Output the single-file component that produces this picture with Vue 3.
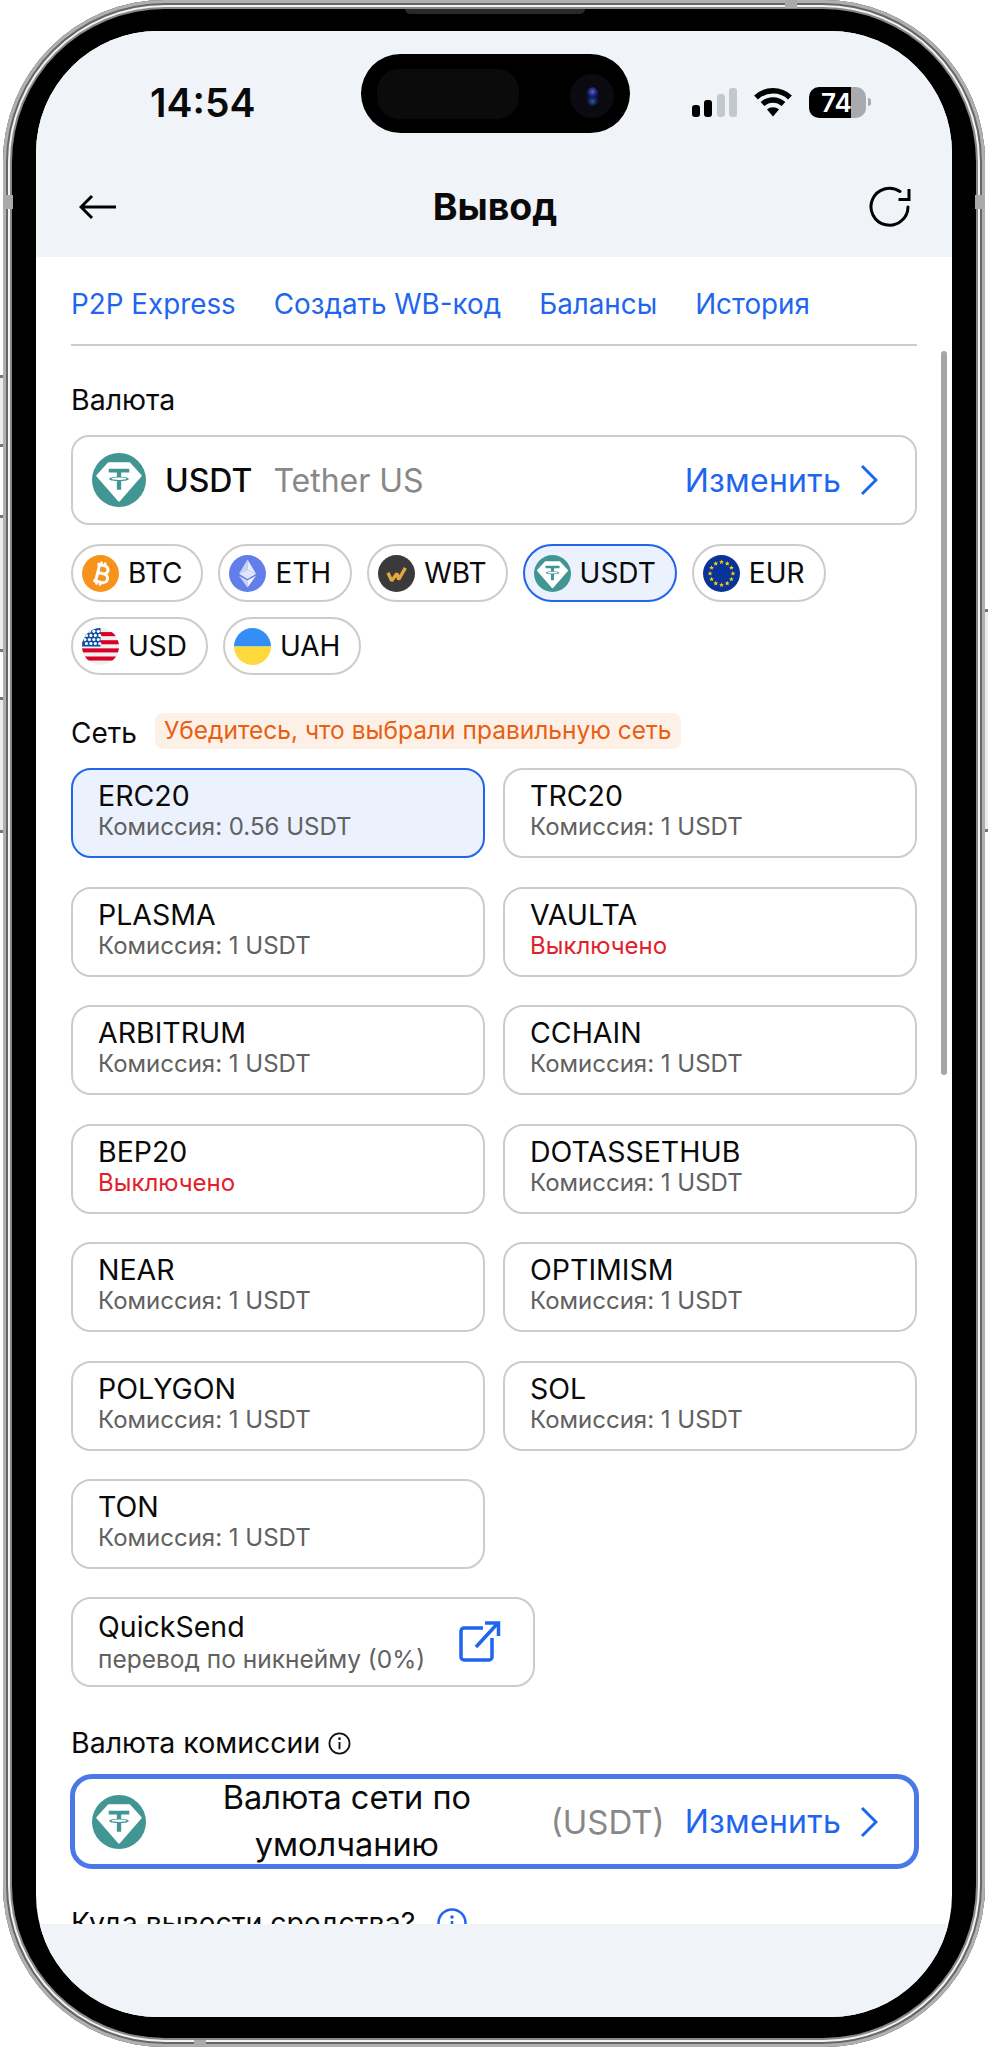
<template>
  <div class="phone">
    <!-- иконки монет -->
    <svg class="sprite" width="0" height="0" aria-hidden="true">
      <symbol id="coin-btc" viewBox="0 0 100 100">
        <circle cx="50" cy="50" r="50" fill="#f7931a" />
        <g transform="rotate(14 50 50)" fill="none" stroke="#fff" stroke-width="8" stroke-linejoin="round">
          <path d="M36 27H55C72 27 72 49 55 49H40M40 49H58C77 49 77 73 58 73H36M42 27V73" />
          <path d="M46 18V27M56 18V27M46 73V82M56 73V82" stroke-width="6.5" />
        </g>
      </symbol>
      <symbol id="coin-eth" viewBox="0 0 100 100">
        <circle cx="50" cy="50" r="50" fill="#627eea" />
        <path d="M50 12V40L27 51Z" fill="#fff" opacity=".65" />
        <path d="M50 12V40L73 51Z" fill="#fff" opacity=".85" />
        <path d="M27 51L50 40L73 51L50 65Z" fill="#dfe5fb" />
        <path d="M27 56L50 69V88Z" fill="#fff" opacity=".7" />
        <path d="M73 56L50 69V88Z" fill="#fff" opacity=".95" />
      </symbol>
      <symbol id="coin-wbt" viewBox="0 0 100 100">
        <circle cx="50" cy="50" r="50" fill="#3a393b" />
        <path d="M27 48L37 70L51 50L56 66L74 35" fill="none" stroke="#e5a93a" stroke-width="9" stroke-linejoin="bevel" />
      </symbol>
      <symbol id="coin-usdt" viewBox="0 0 100 100">
        <circle cx="50" cy="50" r="50" fill="#419592" />
        <path d="M31 19H69L90 42L50 88L10 42Z" fill="#fff" stroke="#fff" stroke-width="4" stroke-linejoin="round" />
        <path d="M31 29H69V36H54V44C62 44.500 68 46 68 48C68 50 62 51.500 54 52V68H46V52C38 51.500 32 50 32 48C32 46 38 44.500 46 44V36H31Z" fill="#419592" />
        <ellipse cx="50" cy="47.500" rx="14" ry="2.300" fill="#fff" />
      </symbol>
      <symbol id="coin-eur" viewBox="0 0 100 100">
        <circle cx="50" cy="50" r="50" fill="#0a3399" />
        <polygon
          v-for="s in euStars"
          :key="s"
          points="0,-7 1.800,-2.200 6.700,-2.200 2.800,.9 4.200,5.700 0,2.900 -4.200,5.700 -2.800,.9 -6.700,-2.200 -1.800,-2.200"
          fill="#ffd500"
          :transform="s"
        />
      </symbol>
      <symbol id="coin-usd" viewBox="0 0 100 100">
        <clipPath id="usd-clip"><circle cx="50" cy="50" r="50" /></clipPath>
        <g clip-path="url(#usd-clip)">
          <rect width="100" height="100" fill="#f0f0f0" />
          <rect y="11" width="100" height="11" fill="#d80027" />
          <rect y="33" width="100" height="11" fill="#d80027" />
          <rect y="55" width="100" height="11" fill="#d80027" />
          <rect y="77" width="100" height="11" fill="#d80027" />
          <path d="M0 0H50V50H0Z" fill="#0f4fa8" />
          <circle v-for="d in usDots" :key="d.k" :cx="d.x" :cy="d.y" r="4.200" fill="#fff" />
        </g>
      </symbol>
      <symbol id="coin-uah" viewBox="0 0 100 100">
        <clipPath id="uah-clip"><circle cx="50" cy="50" r="50" /></clipPath>
        <g clip-path="url(#uah-clip)">
          <rect width="100" height="50" fill="#338ff5" />
          <rect y="50" width="100" height="50" fill="#ffd93b" />
        </g>
      </symbol>
    </svg>

    <div class="bezel">
      <div class="screen">
        <div class="island">
          <div class="island-glass"></div>
          <div class="camera"><i></i></div>
        </div>

        <header class="top">
          <div class="status">
            <span class="time">14:54</span>
            <div class="status-icons">
              <div class="signal">
                <i class="on" style="height: 12px"></i>
                <i class="on" style="height: 17px"></i>
                <i style="height: 23px"></i>
                <i style="height: 29px"></i>
              </div>
              <svg class="wifi" viewBox="0 0 38 30">
                <path d="M2 10.500C11.500 1.500 26.500 1.500 36 10.500" fill="none" stroke="#000" stroke-width="5.500" />
                <path d="M8.500 17C14.500 11.500 23.500 11.500 29.500 17" fill="none" stroke="#000" stroke-width="5.500" />
                <path d="M13 22.500C16.500 19.500 21.500 19.500 25 22.500L19 29.500Z" fill="#000" />
              </svg>
              <div class="battery"><span>74</span></div>
              <div class="battery-nub"></div>
            </div>
          </div>
          <div class="nav">
            <svg class="nav-back" viewBox="0 0 38 26">
              <path d="M37 13H2M13 2L2 13L13 24" fill="none" stroke="#000" stroke-width="3" />
            </svg>
            <h1>Вывод</h1>
            <svg class="nav-refresh" viewBox="0 0 42 42">
              <path d="M39 21A18.500 18.500 0 1 1 31 5.500" fill="none" stroke="#000" stroke-width="3" stroke-linecap="round" />
              <path d="M40 3V13.500H29.500" fill="none" stroke="#000" stroke-width="3" />
            </svg>
          </div>
        </header>

        <main class="content">
          <nav class="tabs">
            <a v-for="t in tabs" :key="t">{{ t }}</a>
          </nav>

          <div class="label first">Валюта</div>
          <div class="select">
            <svg class="select-coin"><use href="#coin-usdt" /></svg>
            <span class="select-name">USDT</span>
            <span class="select-sub">Tether US</span>
            <span class="change">Изменить</span>
            <svg class="chevron" viewBox="0 0 18 32">
              <path d="M2 2L16 16L2 30" fill="none" stroke="#1f66ee" stroke-width="3" />
            </svg>
          </div>

          <div class="pills">
            <div v-for="c in coins" :key="c" class="pill" :class="{ active: c === 'USDT' }">
              <svg class="pill-coin"><use :href="'#coin-' + c.toLowerCase()" /></svg>
              <span>{{ c }}</span>
            </div>
          </div>

          <div class="net-head">
            <span class="net-title">Сеть</span>
            <span class="net-warn">Убедитесь, что выбрали правильную сеть</span>
          </div>

          <div class="networks">
            <div v-for="n in networks" :key="n.name" class="net" :class="{ active: n.name === 'ERC20' }">
              <div class="net-name">{{ n.name }}</div>
              <div class="net-fee" :class="{ off: !n.fee }">{{ n.fee ? 'Комиссия: ' + n.fee + ' USDT' : 'Выключено' }}</div>
            </div>
          </div>

          <div class="quick">
            <div>
              <div class="net-name">QuickSend</div>
              <div class="net-fee">перевод по никнейму (0%)</div>
            </div>
            <svg class="quick-icon" viewBox="0 0 42 42">
              <path d="M24 8H5C3.300 8 2 9.300 2 11V37C2 38.700 3.300 40 5 40H30C31.700 40 33 38.700 33 37V18" fill="none" stroke="#1f66ee" stroke-width="3.500" />
              <path d="M17 27L39 3M26 3H39.500V16" fill="none" stroke="#1f66ee" stroke-width="3.500" />
            </svg>
          </div>

          <div class="label fee-label">
            Валюта комиссии
            <svg class="info" viewBox="0 0 24 24">
              <circle cx="12" cy="12" r="10.500" fill="none" stroke="#111" stroke-width="1.800" />
              <circle cx="12" cy="7" r="1.400" fill="#111" />
              <path d="M12 10.500V18" stroke="#111" stroke-width="2" />
            </svg>
          </div>
          <div class="select focused">
            <svg class="select-coin"><use href="#coin-usdt" /></svg>
            <span class="select-title">Валюта сети по умолчанию</span>
            <span class="select-code">(USDT)</span>
            <span class="change">Изменить</span>
            <svg class="chevron" viewBox="0 0 18 32">
              <path d="M2 2L16 16L2 30" fill="none" stroke="#1f66ee" stroke-width="3" />
            </svg>
          </div>

          <div class="label where">
            Куда вывести средства?
            <svg class="info-blue" viewBox="0 0 30 30">
              <circle cx="15" cy="15" r="13.500" fill="none" stroke="#1f66ee" stroke-width="2.500" />
              <circle cx="15" cy="9" r="1.800" fill="#1f66ee" />
              <path d="M15 13V22" stroke="#1f66ee" stroke-width="2.500" />
            </svg>
          </div>

          <div class="scrollbar"></div>
        </main>

        <footer class="bottom"></footer>
      </div>
    </div>

    <i class="speaker"></i>
    <i class="btn right-power"></i>
    <i class="btn left-silent"></i>
    <i class="btn left-up"></i>
    <i class="btn left-down"></i>
    <i class="band band-l"></i>
    <i class="band band-r"></i>
    <i class="band band-t"></i>
    <i class="band band-b"></i>
  </div>
</template>

<script setup>
const tabs = ['P2P Express', 'Создать WB-код', 'Балансы', 'История']
const coins = ['BTC', 'ETH', 'WBT', 'USDT', 'EUR', 'USD', 'UAH']

const networks = [
  { name: 'ERC20', fee: '0.56' },
  { name: 'TRC20', fee: '1' },
  { name: 'PLASMA', fee: '1' },
  { name: 'VAULTA', fee: '' },
  { name: 'ARBITRUM', fee: '1' },
  { name: 'CCHAIN', fee: '1' },
  { name: 'BEP20', fee: '' },
  { name: 'DOTASSETHUB', fee: '1' },
  { name: 'NEAR', fee: '1' },
  { name: 'OPTIMISM', fee: '1' },
  { name: 'POLYGON', fee: '1' },
  { name: 'SOL', fee: '1' },
  { name: 'TON', fee: '1' },
]

// звёзды флага ЕС по кругу
const euStars = Array.from({ length: 12 }, (_, i) => {
  const a = (i * Math.PI) / 6
  const x = 50 + 31 * Math.sin(a)
  const y = 50 - 31 * Math.cos(a)
  return `translate(${x.toFixed(1)} ${y.toFixed(1)})`
})

const usDots = []
for (let r = 0; r < 4; r++) {
  for (let c = 0; c < 4; c++) {
    usDots.push({ k: `${r}-${c}`, x: 8 + c * 12 + (r % 2) * 4, y: 9 + r * 11 })
  }
}
</script>

<style>
html,
body {
  background: #fff;
}
</style>

<style scoped>
.phone {
  position: relative;
  width: 989px;
  height: 2048px;
  padding: 0 4px 1px 3px;
  box-sizing: border-box;
  background: #fff;
  font-family: Inter, 'Liberation Sans', sans-serif;
  color: #0a0a0a;
  overflow: hidden;
}

.sprite {
  position: absolute;
}

.bezel {
  height: 100%;
  box-sizing: border-box;
  padding: 31px 33px 30px 33px;
  background: #000;
  border-radius: 162px;
  box-shadow:
    inset 0 0 0 3px #b0b0b0,
    inset 0 0 0 5px #666,
    inset 0 0 0 7px #f2f2f2,
    inset 0 0 0 9px #888;
}

.screen {
  position: relative;
  display: flex;
  flex-direction: column;
  height: 100%;
  background: #fff;
  border-radius: 122px;
  overflow: hidden;
}

/* шапка */
.top {
  flex: none;
  height: 226px;
  background: #f0f4f9;
}

.status {
  display: flex;
  justify-content: space-between;
  align-items: center;
  height: 142px;
  padding: 0 81px 0 114px;
  box-sizing: border-box;
}

.time {
  font-size: 39px;
  font-weight: 600;
}

.status-icons {
  display: flex;
  align-items: center;
  gap: 0;
}

.signal {
  display: flex;
  align-items: flex-end;
  gap: 4.5px;
  height: 29px;
  margin-right: 17px;
}

.signal i {
  width: 8px;
  border-radius: 3px;
  background: #c3c8cc;
}

.signal i.on {
  background: #000;
}

.wifi {
  width: 38px;
  height: 30px;
  margin-right: 17px;
}

.battery {
  width: 57px;
  height: 31px;
  border-radius: 10px;
  background: linear-gradient(90deg, #000 42px, #a9aab0 42px);
  display: flex;
  align-items: center;
  justify-content: center;
  color: #fff;
  font-size: 26px;
  font-weight: 600;
}

.battery span {
  margin-left: -2px;
}

.battery-nub {
  width: 3px;
  height: 8px;
  margin-left: 2px;
  border-radius: 0 3px 3px 0;
  background: #a9aab0;
}

.island {
  position: absolute;
  left: 325px;
  top: 23px;
  width: 269px;
  height: 79px;
  border-radius: 40px;
  background: #000;
}

.island-glass {
  position: absolute;
  left: 16px;
  top: 15px;
  width: 142px;
  height: 50px;
  border-radius: 22px;
  background: #0b0b0b;
}

.camera {
  position: absolute;
  left: 209px;
  top: 20px;
  width: 44px;
  height: 44px;
  display: flex;
  align-items: center;
  justify-content: center;
  border-radius: 50%;
  background: #0a0a10;
}

.camera i {
  width: 13px;
  height: 19px;
  border-radius: 50%;
  background:
    radial-gradient(circle at 50% 25%, #5a6ad8 0, #2a2f8a 3px, transparent 6px),
    radial-gradient(circle at 50% 75%, #1f6a9a 0, #142a66 3px, transparent 6px),
    #0c0e38;
}

.nav {
  position: relative;
  display: flex;
  align-items: center;
  justify-content: space-between;
  height: 68px;
  padding: 0 41px 0 43px;
}

.nav h1 {
  margin: 0 0 0 4px;
  font-size: 37.5px;
  font-weight: 700;
  line-height: 68px;
}

.nav-back {
  width: 38px;
  height: 26px;
}

.nav-refresh {
  width: 42px;
  height: 42px;
}

/* содержимое */
.content {
  position: relative;
  flex: 1;
  min-height: 0;
  overflow: hidden;
  padding: 0 35px;
}

.tabs {
  display: flex;
  gap: 38px;
  padding: 28px 0 21px;
  border-bottom: 2px solid #ccc;
  font-size: 27.8px;
  line-height: 38px;
  color: #1f66ee;
}

.label {
  font-size: 28.5px;
  line-height: 36px;
}

.label.first {
  margin-top: 36px;
}

.select {
  display: flex;
  align-items: center;
  height: 90px;
  box-sizing: border-box;
  margin-top: 17px;
  padding: 0 37px 0 19px;
  border: 2px solid #ccc;
  border-radius: 18px;
  font-size: 32px;
}

.select-coin {
  flex: none;
  width: 54px;
  height: 54px;
  margin-right: 19px;
}

.select-name {
  font-weight: 500;
}

.select-sub {
  margin-left: 21px;
  color: #888;
}

.change {
  margin-left: auto;
  color: #1f66ee;
  letter-spacing: 0.25px;
}

.chevron {
  flex: none;
  width: 18px;
  height: 32px;
  margin-left: 19px;
}

.pills {
  display: flex;
  flex-wrap: wrap;
  gap: 15px;
  margin-top: 19px;
}

.pill {
  display: flex;
  align-items: center;
  height: 58px;
  box-sizing: border-box;
  padding: 0 19px 0 9px;
  border: 2px solid #ccc;
  border-radius: 29px;
  font-size: 28px;
}

.pill.active {
  border-color: #2166ea;
  background: #ebf1fd;
}

.pill-coin {
  width: 37px;
  height: 37px;
  margin-right: 9px;
}

.net-head {
  display: flex;
  align-items: center;
  gap: 18px;
  margin-top: 38px;
  height: 36px;
}

.net-title {
  font-size: 28px;
  padding-top: 3px;
}

.net-warn {
  height: 36px;
  padding: 0 9px;
  border-radius: 8px;
  background: #fdf0e7;
  color: #e85f13;
  font-size: 24.5px;
  line-height: 34px;
}

.networks {
  display: grid;
  grid-template-columns: 414px 414px;
  column-gap: 18px;
  row-gap: 28.5px;
  margin-top: 19px;
}

.net,
.quick {
  height: 90px;
  box-sizing: border-box;
  padding: 9px 25px 0;
  border: 2px solid #ccc;
  border-radius: 20px;
}

.net.active {
  border-color: #2166ea;
  background: #ebf1fd;
}

.net-name {
  font-size: 28.5px;
  line-height: 34px;
}

.net-fee {
  margin-top: 1px;
  font-size: 24px;
  line-height: 26px;
  color: #616161;
}

.net-fee.off {
  color: #e2202c;
}

.quick {
  display: flex;
  justify-content: space-between;
  width: 464px;
  margin-top: 28px;
  padding-top: 11px;
  padding-right: 32px;
}

.quick .net-fee {
  margin-top: 2px;
  font-size: 24.5px;
}

.quick-icon {
  width: 42px;
  height: 42px;
  margin-top: 10px;
}

.fee-label {
  display: flex;
  align-items: center;
  gap: 8px;
  margin-top: 38px;
}

.info {
  width: 23px;
  height: 23px;
}

.select.focused {
  height: 95px;
  margin: 13px -2px 0 -1px;
  padding: 0 36px 0 17px;
  border: 5px solid #4a78e8;
  border-radius: 22px;
}

.select-title {
  flex: 1;
  padding: 0 22px 2px 0;
  text-align: center;
  line-height: 47px;
  font-size: 32.5px;
}

.select-code {
  color: #888;
  margin-right: 20px;
  font-size: 33px;
}

.select.focused .change {
  margin-left: 0;
}

.where {
  display: flex;
  align-items: center;
  gap: 22px;
  margin-top: 36px;
}

.info-blue {
  width: 30px;
  height: 30px;
}

.scrollbar {
  position: absolute;
  left: 905px;
  top: 94px;
  width: 6px;
  height: 724px;
  border-radius: 3px;
  background: #a6a6a6;
}

.bottom {
  flex: none;
  height: 93px;
  background: #f0f4f9;
}

/* детали корпуса */
.speaker {
  position: absolute;
  left: 405px;
  top: 9px;
  width: 180px;
  height: 5px;
  border-radius: 0 0 6px 6px;
  background: #2a2a2a;
}

.btn {
  position: absolute;
  box-sizing: border-box;
  background: #ececec;
  border-style: solid;
  border-color: #777;
  border-width: 3px 0;
}

.right-power {
  left: 985px;
  top: 609px;
  width: 3px;
  height: 223px;
}

.left-silent {
  left: 0;
  top: 375px;
  width: 3px;
  height: 72px;
}

.left-up {
  left: 0;
  top: 515px;
  width: 3px;
  height: 137px;
}

.left-down {
  left: 0;
  top: 697px;
  width: 3px;
  height: 136px;
}

.band {
  position: absolute;
  background: #aaa;
}

.band-l {
  left: 3px;
  top: 195px;
  width: 10px;
  height: 14px;
}

.band-r {
  left: 975px;
  top: 195px;
  width: 10px;
  height: 14px;
}

.band-t {
  left: 785px;
  top: 0;
  width: 12px;
  height: 8px;
}

.band-b {
  left: 194px;
  top: 2040px;
  width: 12px;
  height: 7px;
}
</style>
